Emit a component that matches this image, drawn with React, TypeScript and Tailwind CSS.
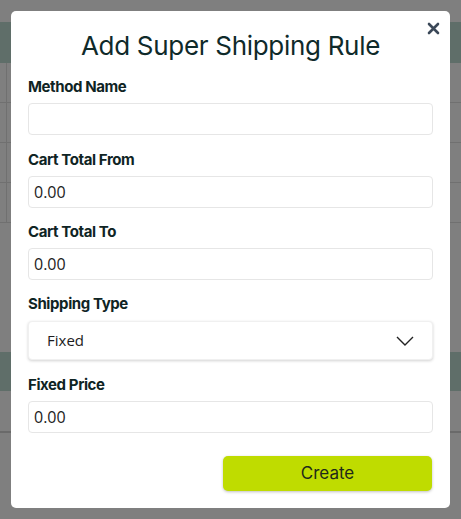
import React from "react";

function Field({ label, value, mt }: { label: string; value: string; mt: string }) {
  return (
    <div className={`flex flex-col ${mt}`}>
      <label className="text-[15px] leading-[20px] font-bold text-[#0f2424] tracking-[-0.4px]">{label}</label>
      <div className="mt-[6px] h-[32px] rounded-[4px] border border-[#e6e6e6] bg-white flex items-center px-[5px] text-[16px] text-[#1c1c1c] font-['Open_Sans',sans-serif]">
        {value}
      </div>
    </div>
  );
}

export default function App() {
  return (
    <div className="relative w-[461px] h-[519px] overflow-hidden bg-[#7f7f7f] font-['Inter',sans-serif]">
      {/* backdrop page */}
      <div className="flex flex-col">
        <div className="h-[22px]" />
        <div className="h-[41px] bg-[#5f6e69]" />
        <div className="flex flex-col">
          {[0, 1, 2, 3].map((i) => (
            <div key={i} className="h-[40px] border-b border-[#707070] flex">
              <div className="w-[7px] border-r border-[#707070]" />
            </div>
          ))}
        </div>
        <div className="h-[129px]" />
        <div className="h-[39px] bg-[#5f6e69]" />
        <div className="h-[42px] border-b-2 border-[#6a6a6a]" />
      </div>

      {/* modal */}
      <div className="absolute left-[11px] top-[11px] w-[439px] h-[497px] bg-white rounded-[5px] px-[17px] pt-[19px]">
        <button className="absolute left-[416px] top-[11px] w-[13px] h-[13px]">
          <svg width="13" height="13" viewBox="0 0 13 13" fill="none">
            <path d="M2 2l9 9M11 2l-9 9" stroke="#3b4858" strokeWidth="2.6" strokeLinecap="round" />
          </svg>
        </button>
        <h2 className="text-center text-[26px] leading-[32px] text-[#0f2a2a] tracking-[-0.3px]">Add Super Shipping Rule</h2>
        <Field label="Method Name" value="" mt="mt-[15px]" />
        <Field label="Cart Total From" value="0.00" mt="mt-[15px]" />
        <Field label="Cart Total To" value="0.00" mt="mt-[14px]" />
        <div className="flex flex-col mt-[14px]">
          <label className="text-[15px] leading-[20px] font-bold text-[#0f2424] tracking-[-0.4px]">Shipping Type</label>
          <div className="mt-[7px] h-[39px] rounded-[4px] bg-white shadow-[0_1px_3px_rgba(0,0,0,0.18)] border border-[#f0f0f0] flex items-center justify-between pl-[18px] pr-[18px] text-[15px] text-[#1c1c1c] font-['Open_Sans',sans-serif]">
            <span>Fixed</span>
            <svg width="18" height="10" viewBox="0 0 18 10" fill="none">
              <path d="M1 1l8 8 8-8" stroke="#222" strokeWidth="1.4" />
            </svg>
          </div>
        </div>
        <Field label="Fixed Price" value="0.00" mt="mt-[15px]" />
        <div className="flex justify-end mt-[23px] pr-[1px]">
          <button className="w-[209px] h-[35px] rounded-[5px] bg-[#bfdc00] shadow-[0_1px_3px_rgba(0,0,0,0.25)] text-[17px] text-[#1f2a1a]">
            Create
          </button>
        </div>
      </div>
    </div>
  );
}
